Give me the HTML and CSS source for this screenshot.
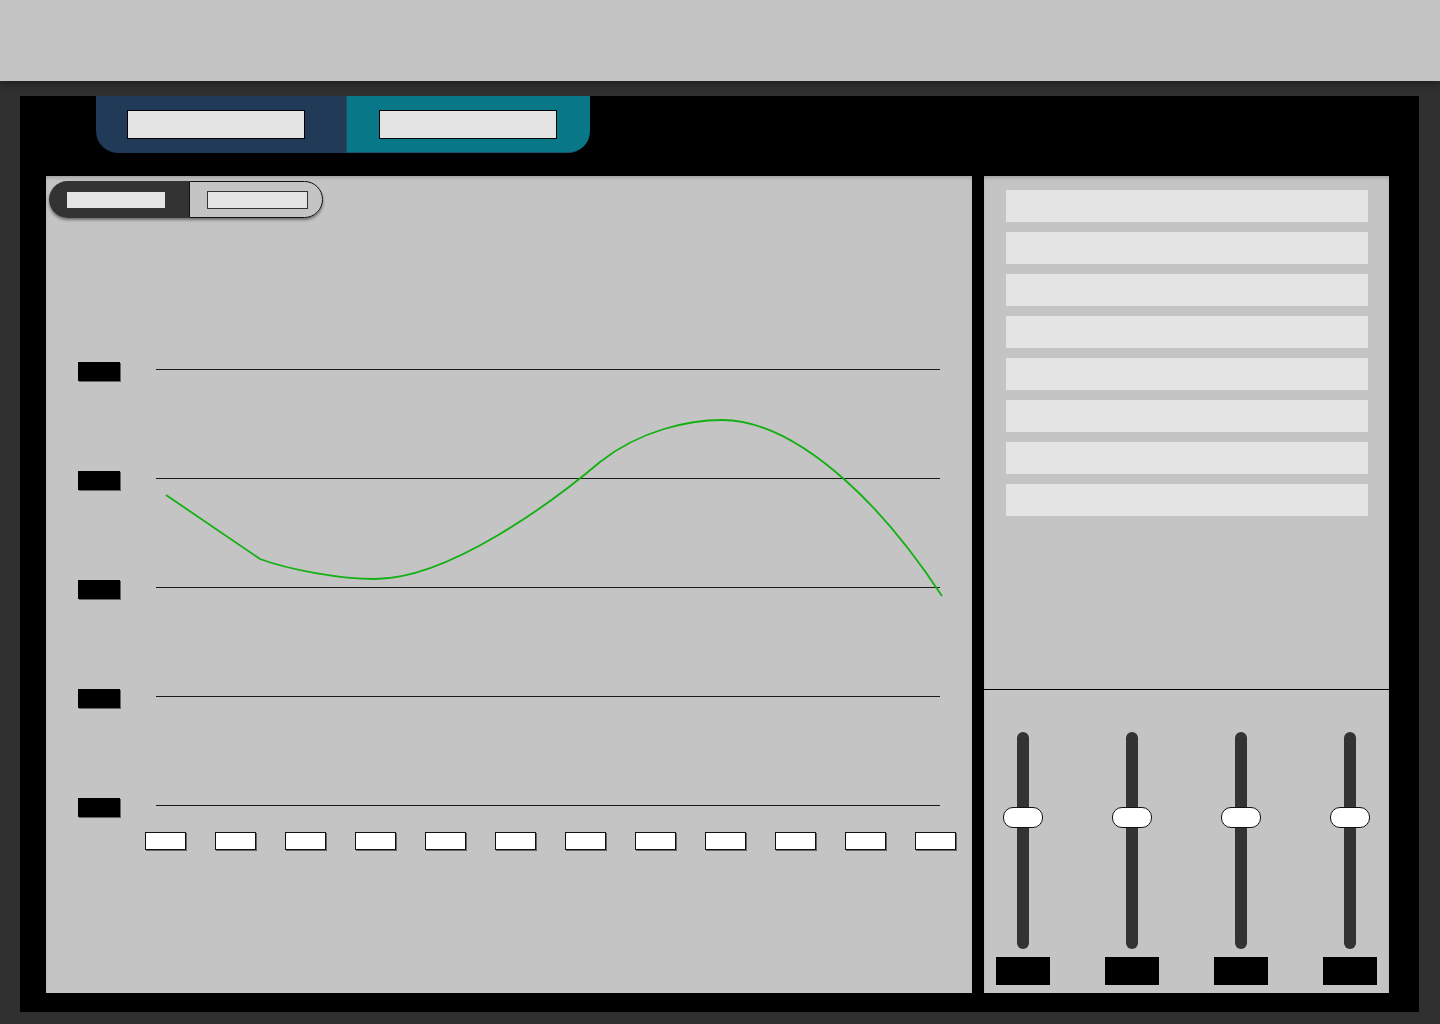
FILE: index.html
```html
<!DOCTYPE html>
<html lang="en">
<head>
<meta charset="utf-8">
<title>Dashboard</title>
<link rel="stylesheet" href="styles.css">
</head>
<body>
<header class="topbar"></header>
<main class="frame">
  <nav class="tabs">
    <div class="tab tab-primary"><span class="tab-label"></span></div>
    <div class="tab tab-secondary"><span class="tab-label"></span></div>
  </nav>
  <div class="workspace">
    <section class="chart-panel">
      <div class="toggle">
        <div class="toggle-seg toggle-on"><span class="toggle-label"></span></div>
        <div class="toggle-seg toggle-off"><span class="toggle-label"></span></div>
      </div>
      <div class="grid-rows">
        <div class="grid-row"><span class="y-label"></span><span class="grid-line"></span></div>
        <div class="grid-row"><span class="y-label"></span><span class="grid-line"></span></div>
        <div class="grid-row"><span class="y-label"></span><span class="grid-line"></span></div>
        <div class="grid-row"><span class="y-label"></span><span class="grid-line"></span></div>
        <div class="grid-row"><span class="y-label"></span><span class="grid-line"></span></div>
      </div>
      <div class="x-labels">
        <span class="x-label"></span><span class="x-label"></span><span class="x-label"></span>
        <span class="x-label"></span><span class="x-label"></span><span class="x-label"></span>
        <span class="x-label"></span><span class="x-label"></span><span class="x-label"></span>
        <span class="x-label"></span><span class="x-label"></span><span class="x-label"></span>
      </div>
      <svg class="curve" width="926" height="817" viewBox="46 176 926 817" aria-hidden="true">
        <path d="M166,495 L260,559 C290,570 340,579 375,579 C450,579 555,500 600,462 C640,430 690,420 722,420 C760,420 800,440 845,480 C880,511 915,555 942,596" fill="none" stroke="#12b012" stroke-width="1.8"/>
      </svg>
    </section>
    <aside class="side-panel">
      <div class="list">
        <div class="list-item"></div>
        <div class="list-item"></div>
        <div class="list-item"></div>
        <div class="list-item"></div>
        <div class="list-item"></div>
        <div class="list-item"></div>
        <div class="list-item"></div>
        <div class="list-item"></div>
      </div>
      <div class="sliders">
        <div class="slider"><div class="track"><span class="thumb"></span></div><span class="slider-label"></span></div>
        <div class="slider"><div class="track"><span class="thumb"></span></div><span class="slider-label"></span></div>
        <div class="slider"><div class="track"><span class="thumb"></span></div><span class="slider-label"></span></div>
        <div class="slider"><div class="track"><span class="thumb"></span></div><span class="slider-label"></span></div>
      </div>
    </aside>
  </div>
</main>
</body>
</html>
```
FILE: styles.css
```css
* { box-sizing: border-box; }

html, body {
  margin: 0;
  padding: 0;
}

body {
  width: 1440px;
  height: 1024px;
  background: #303030;
  font-family: "Liberation Sans", Arial, sans-serif;
  overflow: hidden;
}

.topbar {
  position: relative;
  z-index: 1;
  height: 81px;
  background: #c4c4c4;
  box-shadow: 0 2px 8px rgba(0, 0, 0, 0.45);
}

.frame {
  display: flex;
  flex-direction: column;
  height: 916px;
  margin: 15px 21px 12px 20px;
  background: #000;
}

.tabs {
  display: flex;
  height: 57px;
  margin-left: 76px;
}

.tab {
  display: flex;
  align-items: center;
  height: 57px;
}

.tab-primary {
  width: 250px;
  padding-left: 31px;
  background: #203a58;
  border-bottom-left-radius: 22px;
}

.tab-secondary {
  width: 244px;
  padding-left: 33px;
  background: #087888;
  border-bottom-right-radius: 22px;
  box-shadow: inset 1px -1px 0 rgba(32, 58, 88, 0.6);
}

.tab-label {
  display: block;
  width: 178px;
  height: 29px;
  background: #e4e4e4;
  border: 1px solid #000;
}

.workspace {
  display: flex;
  gap: 12px;
  flex: 1;
  padding: 23px 30px 19px 26px;
}

.chart-panel {
  position: relative;
  width: 926px;
  background: #c4c4c4;
  box-shadow: inset 0 3px 4px -2px rgba(0, 0, 0, 0.25);
  padding: 5px 0 0 3px;
}

.toggle {
  display: flex;
  width: 274px;
  height: 37px;
  border-radius: 19px;
  box-shadow: 0 2px 3px rgba(0, 0, 0, 0.45);
}

.toggle-seg {
  display: flex;
  align-items: center;
  height: 37px;
}

.toggle-on {
  width: 140px;
  padding-left: 17px;
  background: #333;
  border-radius: 19px 0 0 19px;
}

.toggle-off {
  width: 134px;
  padding-left: 18px;
  background: #c4c4c4;
  border: 1px solid #111;
  border-radius: 0 19px 19px 0;
}

.toggle-label {
  display: block;
  width: 100px;
  height: 18px;
  background: #e4e4e4;
  border: 1px solid #333;
}

.toggle-off .toggle-label {
  width: 101px;
  margin-left: -1px;
}

.grid-rows {
  display: flex;
  flex-direction: column;
  gap: 90px;
  margin-top: 144px;
  margin-left: 29px;
}

.grid-row {
  display: flex;
  align-items: flex-start;
  height: 19px;
}

.y-label {
  display: block;
  width: 42px;
  height: 19px;
  background: #000;
  box-shadow: 1px 1px 0 #666;
}

.grid-line {
  display: block;
  width: 784px;
  height: 1px;
  margin-top: 7px;
  margin-left: 36px;
  background: #1a1a1a;
}

.x-labels {
  display: flex;
  gap: 29px;
  margin-top: 15px;
  margin-left: 96px;
}

.x-label {
  display: block;
  width: 41px;
  height: 18px;
  background: #fff;
  border: 1px solid #111;
  box-shadow: 1px 1px 0 #666;
}

.curve {
  position: absolute;
  left: 0;
  top: 0;
  pointer-events: none;
}

.side-panel {
  display: flex;
  flex-direction: column;
  width: 405px;
  background: #c4c4c4;
  box-shadow: inset 0 3px 4px -2px rgba(0, 0, 0, 0.25);
}

.list {
  display: flex;
  flex-direction: column;
  gap: 10px;
  height: 514px;
  padding: 14px 21px 0 22px;
  border-bottom: 1px solid #000;
}

.list-item {
  height: 32px;
  background: #e4e4e4;
}

.sliders {
  display: flex;
  justify-content: space-between;
  padding: 42px 12px 0 12px;
}

.slider {
  display: flex;
  flex-direction: column;
  align-items: center;
  width: 54px;
}

.track {
  position: relative;
  width: 12px;
  height: 217px;
  background: #333;
  border-radius: 6px;
}

.thumb {
  position: absolute;
  left: -14px;
  top: 75px;
  width: 40px;
  height: 21px;
  background: #fff;
  border: 1px solid #111;
  border-radius: 10px;
}

.slider-label {
  display: block;
  width: 54px;
  height: 28px;
  margin-top: 8px;
  background: #000;
}
```
